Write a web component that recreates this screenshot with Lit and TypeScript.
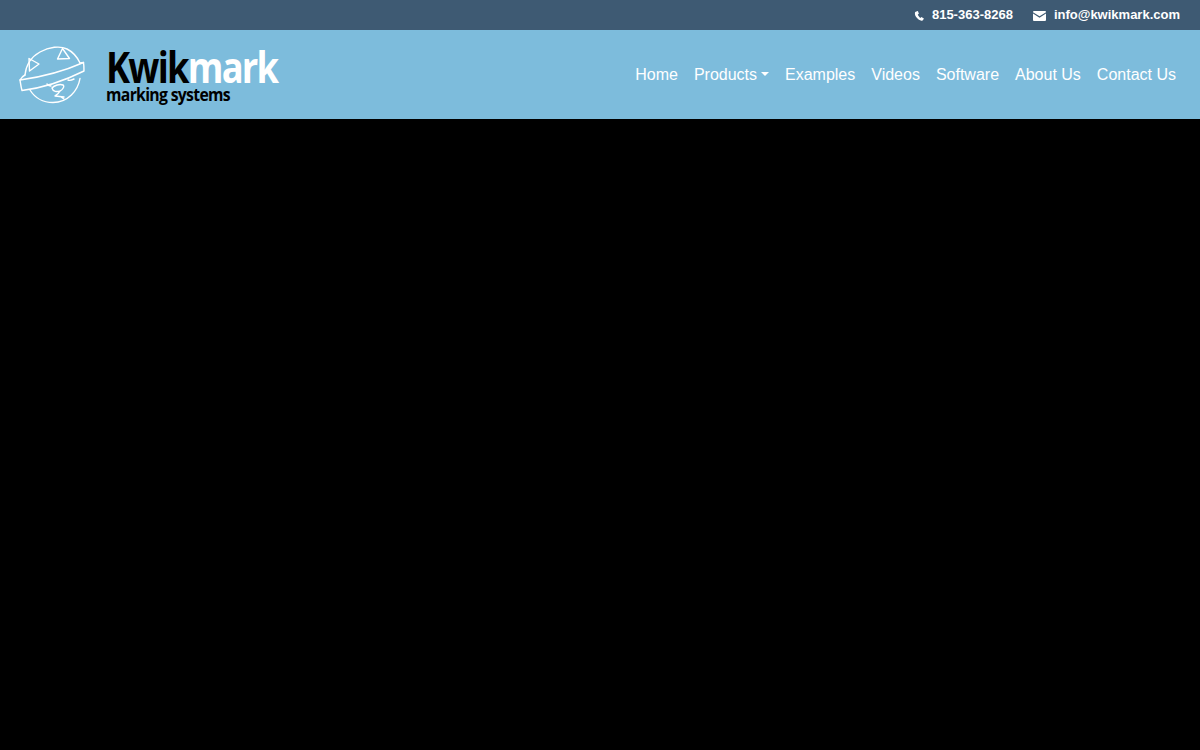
import { LitElement, html, css } from "lit";
import { customElement } from "lit/decorators.js";

@customElement("app-root")
export class AppRoot extends LitElement {
  static styles = css`
    :host { display: block; height: 750px; background: #000; font-family: "Liberation Sans", Arial, sans-serif; overflow: hidden; }
    .top { height: 30px; box-sizing: border-box; background: #3e5a73; color: #fff; display: flex; justify-content: flex-end; align-items: center; gap: 20px; padding: 0 20px 1px 0; font-size: 13px; font-weight: 700; }
    .contact { display: flex; align-items: center; }
    .contact svg { display: block; margin-top: 3px; }
    .phone svg { margin-right: 7px; }
    .mail svg { margin-right: 8px; }
    .head { height: 89px; box-sizing: border-box; background: #7dbcdc; display: flex; justify-content: space-between; align-items: center; padding: 0 24px 0 18px; }
    .brand { display: flex; align-items: flex-start; }
    .globe { display: block; margin-right: 19px; }
    .word { display: flex; flex-direction: column; padding-top: 3px; font-family: "Open Sans", sans-serif; font-weight: 700; color: #000; }
    .name { font-size: 43px; line-height: 39px; letter-spacing: -2.1px; transform: scaleX(0.845); transform-origin: left center; }
    .name span { color: #fff; }
    .sub { font-size: 17.5px; line-height: 16px; letter-spacing: -0.75px; transform: scaleX(0.9); transform-origin: left center; }
    nav { display: flex; gap: 16px; font-size: 16px; color: #fff; }
    nav a { display: flex; align-items: center; }
    .caret { width: 0; height: 0; border-top: 4.8px solid #fff; border-left: 4.8px solid transparent; border-right: 4.8px solid transparent; margin: -2px 0 0 4px; }
  `;
  render() {
    return html`
      <div class="top">
        <div class="contact phone">
          <svg width="11" height="11" viewBox="0 0 11 11"><path d="M2.3.6 3.9 0l1 2.7-1.1.9c.4 1.3 1.3 2.5 2.6 3.3l1-1 2.5 1.6-.8 1.600c-.3.6-1 .9-1.600.7C3.900 8.700.8 5.400.9 2.200c0-.7.6-1.400 1.400-1.600z" fill="#fff"/></svg>
          815-363-8268
        </div>
        <div class="contact mail">
          <svg width="13" height="10" viewBox="0 0 13 10"><path d="M.9 0h11.200c.5 0 .9.4.9.9v.3L6.500 5.300 0 1.200V.9C0 .4.400 0 .9 0z" fill="#fff"/><path d="M0 2.600 6.500 6.700 13 2.600v6.500c0 .5-.4.9-.9.9H.9c-.5 0-.9-.4-.9-.9z" fill="#fff"/></svg>
          info@kwikmark.com
        </div>
      </div>
      <div class="head">
        <div class="brand">
          <svg class="globe" width="69" height="61" viewBox="0 0 69 61" fill="none" stroke="#fff" stroke-width="1.400" stroke-linejoin="round" stroke-linecap="round">
            <path d="M7 31C8 21 13 13 22 8 31 3 42 1.500 49 5c6 3 10 7.500 13 14"/>
            <path d="M12 46c5 8 13 12.500 23 12.500 15 0 25-12 27-24"/>
            <path d="M2 36C24 33 44 28 65.500 18.500c.5 3 .5 6 .5 8.500C46 37 24 44 4 46.500 3 43 2.500 39 2 36z"/>
            <path d="M2 36c1-2 3-4 5-5M65.500 18.500 62 19"/>
            <path d="M11 14.500 21 20 11.500 27z"/>
            <path d="M44.500 4.500 51.500 14.500 39.500 15z"/>
            <path d="M34 44c2-2.500 8-4.500 11-3 2 1-.5 5-3 6-3 1-7 1-8-3zM42 47c-1 2-3 4-5 5l9 1M43 53l3 2M29 40c1 1 2 2 4 2M50 36c2 1 4 0 6-1"/>
          </svg>
          <div class="word">
            <div class="name">Kwik<span>mark</span></div>
            <div class="sub">marking systems</div>
          </div>
        </div>
        <nav>
          <a>Home</a>
          <a>Products<i class="caret"></i></a>
          <a>Examples</a>
          <a>Videos</a>
          <a>Software</a>
          <a>About Us</a>
          <a>Contact Us</a>
        </nav>
      </div>
    `;
  }
}
